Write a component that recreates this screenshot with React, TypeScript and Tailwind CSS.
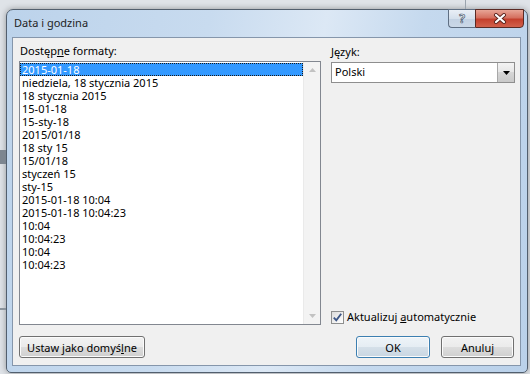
import React from "react";

const formats = [
  "2015-01-18",
  "niedziela, 18 stycznia 2015",
  "18 stycznia 2015",
  "15-01-18",
  "15-sty-18",
  "2015/01/18",
  "18 sty 15",
  "15/01/18",
  "styczeń 15",
  "sty-15",
  "2015-01-18 10:04",
  "2015-01-18 10:04:23",
  "10:04",
  "10:04:23",
  "10:04",
  "10:04:23",
];

const btn =
  "h-[22px] rounded-[3px] border text-[11px] leading-none text-black flex items-center justify-center shadow-[inset_0_0_0_1px_#fbfbfb]";

const App = () => {
  return (
    <div className="relative w-[530px] h-[374px] overflow-hidden bg-[#dfe3e8] pl-[6px] pt-[9px] font-['Noto_Sans',sans-serif]">
      {/* bits of the desktop behind the dialog */}
      <div className="absolute left-[465px] top-0 h-[9px] w-px bg-[#9aa3ad]" />
      <div className="absolute left-0 top-[150px] h-[14px] w-[6px] bg-[#7d8690]" />
      <div className="absolute left-0 top-[308px] h-[2px] w-[6px] bg-[#8a939c]" />

      {/* Window */}
      <div className="w-[522px] h-[364px] flex flex-col rounded-t-[7px] rounded-b-[5px] border border-[#525f6e] bg-[linear-gradient(100deg,#bcd3eb_0%,#c8dbef_35%,#dce8f5_55%,#c5d9ee_72%,#bad1ea_100%)] pl-[5px] pr-[6px] pb-[6px] shadow-[0_0_6px_rgba(0,0,0,0.35)]">
        {/* Title bar */}
        <div className="h-[27px] flex items-start justify-between">
          <div className="h-full flex items-center pl-[2px] text-[11px] text-[#1e1e1e]">
            Data i godzina
          </div>
          <div className="flex -mt-px -mr-[3px]">
            <div className="w-[27px] h-[19px] rounded-bl-[4px] border border-[#5f6f83] border-r-0 bg-[linear-gradient(#e9eff6,#d5e0ec_50%,#c2d1e2_50%,#cbd8e7)] flex items-center justify-center text-[12px] font-bold text-white [-webkit-text-stroke:0.7px_#44536a]">
              ?
            </div>
            <div className="w-[49px] h-[19px] rounded-br-[4px] border border-[#5a2a24] bg-[linear-gradient(#e8a596,#d5705f_45%,#c4402d_55%,#d2614c)] flex items-center justify-center">
              <svg width="14" height="11" viewBox="0 0 14 11">
                <path d="M3 2 L11 9 M11 2 L3 9" stroke="#5b241d" strokeWidth="4" strokeLinecap="round" />
                <path d="M3 2 L11 9 M11 2 L3 9" stroke="#ffffff" strokeWidth="2.2" strokeLinecap="round" />
              </svg>
            </div>
          </div>
        </div>

        {/* Client area */}
        <div className="w-[509px] h-[329px] border border-[#8596ab] bg-[#f0f0f0] pl-[6px] pr-[5px] pt-[4px] pb-[7px] flex flex-col text-[11px] text-black">
          <div className="flex gap-[10px]">
            {/* Left column */}
            <div className="w-[302px] flex flex-col">
              <div className="h-[19px] flex items-center pl-px">
                Dostęp<span className="underline">n</span>e formaty:
              </div>
              <div className="h-[264px] border border-[#828790] bg-white flex">
                <div className="flex-1 pt-px">
                  {formats.map((f, i) => (
                    <div
                      key={i}
                      className={`h-[13px] leading-[13px] pl-[2px] whitespace-nowrap ${
                        i === 0
                          ? "bg-[#3399ff] text-white outline outline-1 outline-dotted outline-[#1a1a1a] -outline-offset-1"
                          : ""
                      }`}
                    >
                      {f}
                    </div>
                  ))}
                </div>
                <div className="w-[17px] bg-[#f3f3f3] border-l border-[#eaeaea] flex flex-col justify-between items-center py-[6px]">
                  <svg width="7" height="4" viewBox="0 0 7 4">
                    <path d="M0 4 L3.5 0 L7 4 Z" fill="#c2c2c2" />
                  </svg>
                  <svg width="7" height="4" viewBox="0 0 7 4">
                    <path d="M0 0 L7 0 L3.5 4 Z" fill="#c2c2c2" />
                  </svg>
                </div>
              </div>
            </div>

            {/* Right column */}
            <div className="w-[184px] flex flex-col">
              <div className="h-[20px] flex items-center">
                <span className="underline">J</span>ęzyk:
              </div>
              <div className="h-[21px] border border-[#8e8e8e] bg-white flex items-center">
                <div className="flex-1 pl-[3px]">Polski</div>
                <div className="w-[17px] h-full border-l border-[#a8a8a8] bg-[linear-gradient(#f4f4f4,#e6e6e6_50%,#d6d6d6_50%,#c9c9c9)] flex items-center justify-center">
                  <svg width="7" height="4" viewBox="0 0 7 4">
                    <path d="M0 0 L7 0 L3.5 4 Z" fill="#000000" />
                  </svg>
                </div>
              </div>
              <div className="flex-1" />
              <div className="h-[13px] mb-px flex items-center gap-[3px]">
                <div className="w-[13px] h-[13px] border border-[#8e8f8f] bg-[linear-gradient(135deg,#dcdcdc,#ffffff)] flex items-center justify-center">
                  <svg width="11" height="11" viewBox="0 0 11 11">
                    <path d="M1.8 5.6 L4.3 8.3 L9.2 1.8" fill="none" stroke="#3d5687" strokeWidth="1.9" />
                  </svg>
                </div>
                <div>
                  Aktualizuj <span className="underline">a</span>utomatycznie
                </div>
              </div>
            </div>
          </div>

          {/* Buttons */}
          <div className="mt-[11px] flex items-center justify-between">
            <button
              className={`${btn} w-[126px] border-[#707070] bg-[linear-gradient(#f2f2f2,#ebebeb_50%,#dddddd_50%,#cfcfcf)]`}
            >
              Ustaw jako domyś<span className="underline">l</span>ne
            </button>
            <div className="flex gap-[11px] mr-px">
              <button
                className={`${btn} w-[74px] border-[#3c7fb1] bg-[linear-gradient(#eef4f8,#e5edf3_50%,#d5e0e9_50%,#c8d6e2)] shadow-[inset_0_0_0_1px_#c9e6f7]`}
              >
                OK
              </button>
              <button
                className={`${btn} w-[73px] border-[#707070] bg-[linear-gradient(#f2f2f2,#ebebeb_50%,#dddddd_50%,#cfcfcf)]`}
              >
                Anuluj
              </button>
            </div>
          </div>
        </div>
      </div>
    </div>
  );
};

export default App;
